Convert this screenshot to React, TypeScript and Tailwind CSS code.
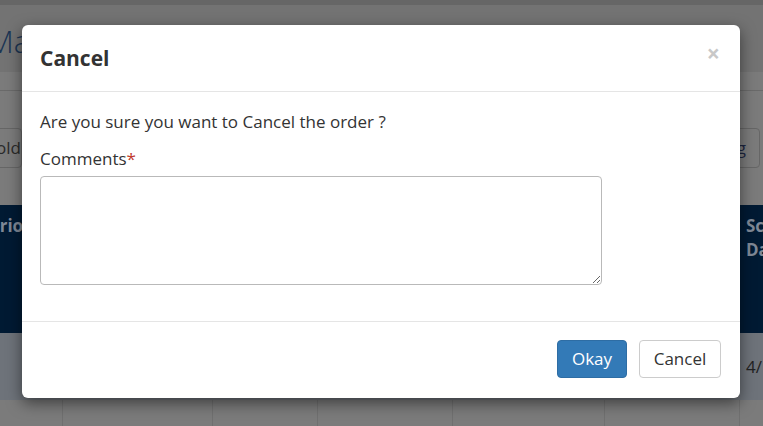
import React from "react";

export default function App() {
  const font = { fontFamily: '"Open Sans", "Noto Sans", sans-serif' };
  return (
    <div className="relative w-[763px] h-[426px] overflow-hidden bg-[#7b7b7b]" style={font}>
      {/* background page (already dimmed) */}
      <div className="flex flex-col w-full">
        <div className="h-[5px] bg-[#666666]" />
        <div className="h-[67px] bg-[#737373] pt-[17px]">
          <div className="text-[31px] leading-[38px] text-[#1b3553] font-light -ml-[13px] whitespace-nowrap">Manage Orders</div>
        </div>
        <div className="h-[19px] bg-[#7b7b7b] border-b border-[#6a6a6a]" />
        <div className="h-[114px] bg-[#7b7b7b] flex justify-between items-start pt-[37px]">
          <div className="h-[40px] w-[70px] -ml-[48px] border border-[#666] rounded-[4px] flex items-center justify-end text-[17px] text-[#2a2a2a] whitespace-nowrap">Hold</div>
          <div className="h-[40px] w-[90px] mr-[3px] border border-[#666] rounded-[4px] flex items-center justify-end pr-[13px] text-[17px] text-[#1d2540] whitespace-nowrap">Printing</div>
        </div>
        <div className="h-[128px] bg-[#001a33] flex justify-between pt-[9px] text-[17px] font-bold text-[#7f8896] leading-[24px]">
          <div className="-ml-[11px] whitespace-nowrap">Priority</div>
          <div className="w-[17px] whitespace-nowrap">
            <div>Sch</div>
            <div>Da</div>
          </div>
        </div>
        <div className="h-[67px] bg-[#6e737a] flex justify-between items-center text-[17px] text-[#222]">
          <div className="pl-[42px]">0</div>
          <div className="w-[17px] whitespace-nowrap">4/1</div>
        </div>
        <div className="h-[26px] flex">
          <div className="w-[63px] border-r border-[#707070]" />
          <div className="w-[150px] border-r border-[#707070]" />
          <div className="w-[105px] border-r border-[#707070]" />
          <div className="w-[135px] border-r border-[#707070]" />
          <div className="w-[152px] border-r border-[#707070]" />
          <div className="w-[135px] border-r border-[#707070]" />
        </div>
      </div>

      {/* modal */}
      <div className="absolute left-[22px] top-[25px] w-[718px] bg-white rounded-[6px] shadow-[0_5px_15px_rgba(0,0,0,0.5)] flex flex-col">
        <div className="h-[67px] border-b border-[#e5e5e5] flex items-center justify-between pl-[18px] pr-[20px]">
          <div className="text-[21px] font-bold text-[#333] leading-[28px]">Cancel</div>
          <div className="text-[23px] font-bold text-[#c8c8c8] leading-none -mt-[9px]">×</div>
        </div>
        <div className="h-[230px] border-b border-[#e5e5e5] pl-[18px] pt-[18px] text-[17px] text-[#333]">
          <div className="leading-[24px]">Are you sure you want to Cancel the order ?</div>
          <div className="leading-[24px] mt-[13px]">
            Comments<span className="text-[#c0392b]">*</span>
          </div>
          <textarea className="block mt-[5px] w-[562px] h-[109px] border border-[#b9b9b9] rounded-[4px] outline-none" />
        </div>
        <div className="h-[76px] flex justify-end items-start pt-[18px] pr-[19px] gap-[12px]">
          <button className="h-[38px] w-[70px] bg-[#337ab7] border border-[#2e6da4] rounded-[4px] text-white text-[17px]">Okay</button>
          <button className="h-[38px] w-[82px] bg-white border border-[#cccccc] rounded-[4px] text-[#333] text-[17px]">Cancel</button>
        </div>
      </div>
    </div>
  );
}
